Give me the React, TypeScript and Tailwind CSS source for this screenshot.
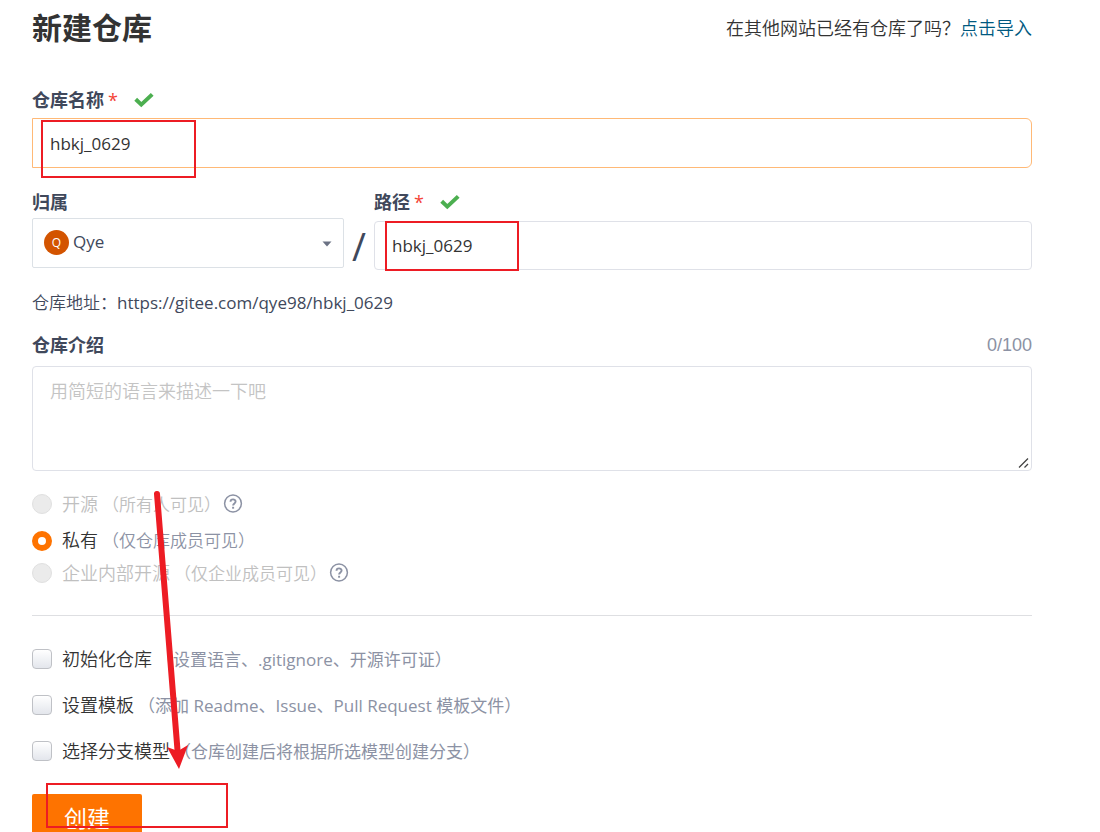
import { useState } from 'react';
import type { ReactNode } from 'react';

const visibilities = [
  { value: 'public', label: '开源', hint: '（所有人可见）', disabled: true, help: true, row: 'h-9' },
  { value: 'private', label: '私有', hint: '（仅仓库成员可见）', disabled: false, help: false, row: 'h-[37px]' },
  { value: 'inner', label: '企业内部开源', hint: '（仅企业成员可见）', disabled: true, help: true, row: 'h-7' },
];

const options = [
  { id: 'init', label: '初始化仓库', hint: '（设置语言、.gitignore、开源许可证）' },
  { id: 'template', label: '设置模板', hint: '（添加 Readme、Issue、Pull Request 模板文件）' },
  { id: 'branch', label: '选择分支模型', hint: '（仓库创建后将根据所选模型创建分支）' },
];

function CheckMark() {
  return (
    <svg viewBox="0 0 20 16" className="ml-4 h-4 w-5" aria-hidden="true">
      <path d="M1.7 7.2 L7.3 12.6 L18.2 2.4" fill="none" stroke="#4caf50" strokeWidth="4" />
    </svg>
  );
}

function HelpIcon() {
  return (
    <svg viewBox="0 0 20 20" className="ml-0.5 h-5 w-5" fill="none" stroke="#8c92a4" aria-hidden="true">
      <circle cx="10" cy="9.5" r="8.4" strokeWidth="1.5" />
      <path d="M7.5 7.8 C7.5 4.6 12.6 4.7 12.6 7.6 C12.6 9.4 10.1 9.4 10.1 11.5" strokeWidth="1.9" />
      <path d="M10.1 12.8 V14.7" strokeWidth="2" />
    </svg>
  );
}

function FieldLabel({ htmlFor, required, children }: { htmlFor: string; required?: boolean; children: ReactNode }) {
  return (
    <div className="flex h-6 items-center">
      <label htmlFor={htmlFor} className="text-lg leading-6 font-bold text-[#40485b]">
        {children}
        {required && <span className="ml-1 font-medium text-[#f44336]">*</span>}
      </label>
      {required && <CheckMark />}
    </div>
  );
}

// Red marker boxes and the arrow drawn over the form
function Annotations() {
  return (
    <svg className="pointer-events-none absolute top-0 left-0 h-[832px] w-[600px]" fill="none" stroke="#ed1c24" strokeWidth="2" aria-hidden="true">
      <rect x="42" y="121" width="153" height="56" />
      <rect x="386" y="222" width="132" height="48" />
      <rect x="47" y="784" width="180" height="43" />
      <path d="M157 494 L177.5 750" strokeWidth="6" strokeLinecap="round" />
      <path d="M167 747 L178 751 L188 745 L179 769 Z" fill="#ed1c24" stroke="none" />
    </svg>
  );
}

export default function App() {
  const [name, setName] = useState('hbkj_0629');
  const [path, setPath] = useState('hbkj_0629');
  const [intro, setIntro] = useState('');
  const [visibility, setVisibility] = useState('private');

  return (
    <main className="relative h-screen overflow-hidden bg-white pr-[68px] pl-8 font-['Open_Sans','Noto_Sans_CJK_SC',sans-serif] text-[17px] leading-6 font-[350] text-[#40485b]">
      <header className="flex h-14 items-center justify-between">
        <h1 className="text-[30px] font-bold text-[#333]">新建仓库</h1>
        <p className="text-lg text-[#333]">
          在其他网站已经有仓库了吗？
          <a href="#import" className="text-[#005980]">点击导入</a>
        </p>
      </header>

      <form onSubmit={(e) => e.preventDefault()}>
        <div className="mt-8">
          <FieldLabel htmlFor="name" required>仓库名称</FieldLabel>
          <input
            id="name"
            value={name}
            onChange={(e) => setName(e.target.value)}
            className="mt-1.5 block h-[50px] w-full rounded-r-md border border-[#ffb976] px-[17px] font-normal text-[#333] outline-none"
          />
        </div>

        <div className="mt-[22px] flex">
          <div className="w-[312px]">
            <FieldLabel htmlFor="owner">归属</FieldLabel>
            <div className="relative mt-1">
              <select
                id="owner"
                className="block h-[50px] w-full appearance-none rounded-xs border border-[#dce1e6] bg-white pr-8 pb-0.5 pl-10 font-normal outline-none"
              >
                <option>Qye</option>
              </select>
              <span className="pointer-events-none absolute top-3 left-3 flex h-[25px] w-[25px] items-center justify-center rounded-full bg-[#d35400] text-xs font-medium text-white">
                Q
              </span>
              <svg viewBox="0 0 10 6" className="pointer-events-none absolute top-[23px] right-3 h-1.5 w-2.5" aria-hidden="true">
                <path d="M0.5 0.5 H9.5 L5 5.5 Z" fill="#6b7284" />
              </svg>
            </div>
          </div>
          <span className="w-[30px] pt-8 text-center text-[38px] leading-12 font-normal">/</span>
          <div className="flex-1">
            <FieldLabel htmlFor="path" required>路径</FieldLabel>
            <input
              id="path"
              value={path}
              onChange={(e) => setPath(e.target.value)}
              className="mt-[7px] block h-[49px] w-full rounded-sm border border-[#dfe1e8] px-[17px] font-normal text-[#333] outline-none"
            />
          </div>
        </div>

        <p className="mt-[21px]">
          仓库地址：<span className="font-normal">https://gitee.com/qye98/{path}</span>
        </p>

        <div className="mt-[18px] flex items-center justify-between">
          <FieldLabel htmlFor="intro">仓库介绍</FieldLabel>
          <span className="font-['Liberation_Sans',sans-serif] text-lg leading-6 text-[#8c92a4]">{intro.length}/100</span>
        </div>
        <div className="relative mt-[9px]">
          <textarea
            id="intro"
            value={intro}
            onChange={(e) => setIntro(e.target.value)}
            maxLength={100}
            placeholder="用简短的语言来描述一下吧"
            className="block h-[105px] w-full resize-none rounded-sm border border-[#dfe1e8] px-[17px] py-3 text-lg leading-6 outline-none placeholder:text-[#c4c4c4]"
          />
          <svg viewBox="0 0 12 12" className="pointer-events-none absolute right-0.5 bottom-0.5 h-3 w-3" stroke="#444" strokeWidth="1.3" aria-hidden="true">
            <path d="M1 10.5 L10 1.5 M6.5 10.5 L10 7" />
          </svg>
        </div>

        <fieldset className="mt-[15px]">
          {visibilities.map((item) => (
            <div key={item.value} className={`flex items-center ${item.row}`}>
              <input
                type="radio"
                id={item.value}
                name="visibility"
                checked={visibility === item.value}
                disabled={item.disabled}
                onChange={() => setVisibility(item.value)}
                className="mr-2.5 h-5 w-5 appearance-none rounded-full border border-[#e0e0e0] bg-[#ebebeb] checked:border-[6px] checked:border-[#fe7300] checked:bg-white"
              />
              <label htmlFor={item.value} className={item.disabled ? 'text-lg leading-6 text-[#c0c0c0]' : 'text-lg leading-6 text-[#333]'}>
                {item.label}
                <span className={item.disabled ? 'ml-1 text-[17px]' : 'ml-1 text-[17px] text-[#8c92a4]'}>{item.hint}</span>
              </label>
              {item.help && <HelpIcon />}
            </div>
          ))}
        </fieldset>

        <hr className="mt-7 border-[#dedfe2]" />

        <div className="mt-5">
          {options.map((option) => (
            <div key={option.id} className="flex h-[46px] items-center">
              <input
                type="checkbox"
                id={option.id}
                className="mr-2.5 h-5 w-5 appearance-none rounded border border-[#bfc1c6] bg-linear-to-b from-white to-[#e3e6ec]"
              />
              <label htmlFor={option.id} className="text-lg leading-6 text-[#333]">
                {option.label}
                <span className="ml-1 text-[17px] font-normal text-[#8c92a4]">{option.hint}</span>
              </label>
            </div>
          ))}
        </div>

        <button type="submit" className="mt-5 block h-12 w-[110px] rounded-xs bg-[#fe7300] text-[23px] font-normal text-white">
          创建
        </button>
      </form>

      <Annotations />
    </main>
  );
}
